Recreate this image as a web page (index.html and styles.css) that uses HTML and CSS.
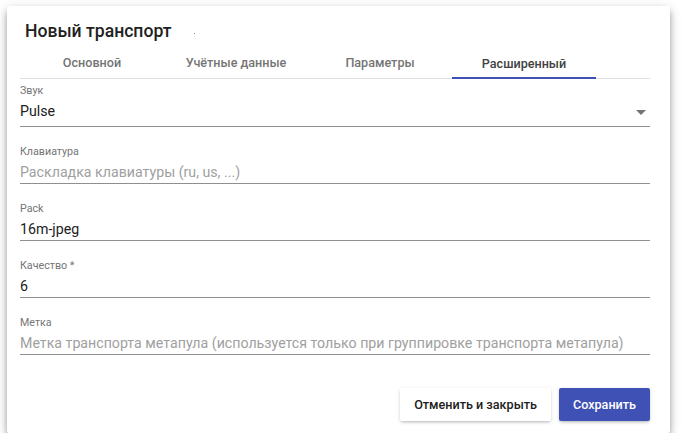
FILE: index.html
```html
<!DOCTYPE html>
<html lang="ru">
<head>
<meta charset="utf-8">
<title>Новый транспорт</title>
<link rel="stylesheet" href="styles.css">
</head>
<body>
<div class="dialog">
  <h1 class="title">Новый транспорт<span class="dot"></span></h1>
  <div class="tabs">
    <div class="tab">Основной</div>
    <div class="tab">Учётные данные</div>
    <div class="tab">Параметры</div>
    <div class="tab active">Расширенный</div>
  </div>
  <div class="fields">
    <div class="field field-select">
      <div class="label">Звук</div>
      <div class="value select">Pulse<span class="arrow"></span></div>
    </div>
    <div class="field">
      <div class="label">Клавиатура</div>
      <div class="value placeholder">Раскладка клавиатуры (ru, us, ...)</div>
    </div>
    <div class="field">
      <div class="label">Pack</div>
      <div class="value">16m-jpeg</div>
    </div>
    <div class="field">
      <div class="label">Качество *</div>
      <div class="value">6</div>
    </div>
    <div class="field">
      <div class="label">Метка</div>
      <div class="value placeholder">Метка транспорта метапула (используется только при группировке транспорта метапула)</div>
    </div>
  </div>
  <div class="actions">
    <button class="btn cancel">Отменить и закрыть</button>
    <button class="btn save">Сохранить</button>
  </div>
</div>
</body>
</html>
```
FILE: styles.css
```css
html, body {
  margin: 0;
  padding: 0;
  background: #fff;
  font-family: Roboto, "Liberation Sans", sans-serif;
}
.dialog {
  margin: 6px 0 0 7px;
  width: 663px;
  height: 427px;
  box-sizing: border-box;
  padding: 13px 20px 12px 13px;
  background: #fff;
  border-radius: 2px;
  box-shadow: 0 4px 6px -1px rgba(0,0,0,.28), 0 6px 10px 0 rgba(0,0,0,.16), 0 1px 14px 0 rgba(0,0,0,.10);
  display: flex;
  flex-direction: column;
}
.title {
  margin: 0 0 5px 5px;
  font-size: 17.6px;
  line-height: 24px;
  font-weight: 500;
  color: #212121;
  display: flex;
  align-items: center;
}
.dot {
  width: 1px;
  height: 1px;
  background: #888;
  margin-left: 23px;
  margin-top: 4px;
}
.tabs {
  display: flex;
  height: 30px;
  border-bottom: 1px solid #e0e0e0;
}
.tab {
  width: 144px;
  box-sizing: border-box;
  text-align: center;
  font-size: 12.6px;
  font-weight: 500;
  line-height: 30px;
  color: #757575;
}
.tab.active {
  color: #424242;
  border-bottom: 2px solid #3f51b5;
  margin-bottom: -1px;
  line-height: 31px;
}
.fields {
  margin-top: 5px;
  display: flex;
  flex-direction: column;
  gap: 18px;
}
.field {
  border-bottom: 1px solid #8f8f8f;
  padding-bottom: 1px;
}
.field.field-select {
  padding-bottom: 5px;
}
.label {
  font-size: 10.7px;
  line-height: 14px;
  color: #757575;
  margin-bottom: 3px;
}
.value {
  font-size: 14.2px;
  line-height: 20px;
  color: #212121;
  white-space: nowrap;
}
.value.placeholder {
  color: #a0a0a0;
}
.select {
  display: flex;
  justify-content: space-between;
  align-items: center;
}
.arrow {
  width: 0;
  height: 0;
  border-left: 5px solid transparent;
  border-right: 5px solid transparent;
  border-top: 5px solid #757575;
  margin-right: 4px;
  margin-top: 2px;
}
.actions {
  margin-top: auto;
  display: flex;
  justify-content: flex-end;
  gap: 8px;
}
.btn {
  height: 33px;
  border: none;
  border-radius: 2px;
  padding: 0 14px;
  font-family: Roboto, "Liberation Sans", sans-serif;
  font-size: 12.6px;
  font-weight: 500;
}
.cancel {
  background: #fff;
  color: #212121;
  box-shadow: 0 2px 3px -1px rgba(0,0,0,.2), 0 1px 4px 0 rgba(0,0,0,.12);
}
.save {
  background: #3f51b5;
  color: #fff;
  box-shadow: 0 2px 3px -1px rgba(0,0,0,.2), 0 1px 4px 0 rgba(0,0,0,.12);
}
```
